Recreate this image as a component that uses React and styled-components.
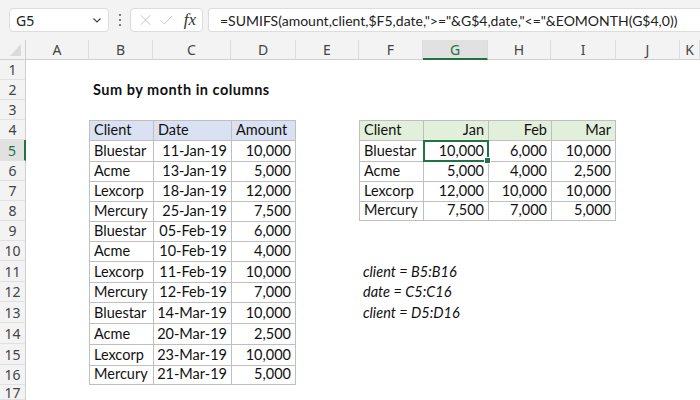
import React from 'react';
import styled, { createGlobalStyle } from 'styled-components';

const GlobalStyle = createGlobalStyle`
    html, body {
        margin: 0;
        padding: 0;
        background: #ffffff;
    }
    body {
        width: 700px;
        height: 400px;
        overflow: hidden;
    }
`;

const UI_FONT = '"Noto Sans", "Open Sans", sans-serif';
const CELL_FONT = 'Lato, "Liberation Sans", sans-serif';
const GREEN = '#217346';

const COLUMNS = [
    { key: 'A', width: 63 },
    { key: 'B', width: 64 },
    { key: 'C', width: 78 },
    { key: 'D', width: 65 },
    { key: 'E', width: 63 },
    { key: 'F', width: 64 },
    { key: 'G', width: 65 },
    { key: 'H', width: 63 },
    { key: 'I', width: 65 },
    { key: 'J', width: 64 },
    { key: 'K', width: 20 },
];

// row heights in px, row 1..17
const ROW_HEIGHTS = [20, 20, 20, 20, 21, 20, 20, 20, 20, 20, 21, 20, 21, 21, 21, 20, 15];

const Page = styled.div`
    display: flex;
    flex-direction: column;
    width: 700px;
    height: 400px;
    background: #ffffff;
    overflow: hidden;
`;

const Toolbar = styled.div`
    display: flex;
    align-items: center;
    height: 40px;
    padding: 0 0 0 9px;
    box-sizing: border-box;
    background: #f3f3f3;
`;

const NameBox = styled.div`
    display: flex;
    align-items: center;
    justify-content: space-between;
    width: 100px;
    height: 24px;
    box-sizing: border-box;
    padding: 0 5px 0 6px;
    background: #ffffff;
    border: 1px solid #dcdcdc;
    border-radius: 4px;
    font-family: ${UI_FONT};
    font-size: 14px;
    color: #222;
`;

const Kebab = styled.div`
    display: flex;
    flex-direction: column;
    align-items: center;
    gap: 3px;
    width: 21px;

    span {
        width: 2px;
        height: 2px;
        background: #555;
        border-radius: 1px;
    }
`;

const FxBox = styled.div`
    display: flex;
    align-items: center;
    gap: 9px;
    width: 73px;
    height: 24px;
    box-sizing: border-box;
    padding: 0 6px 0 9px;
    background: #ffffff;
    border: 1px solid #dcdcdc;
    border-radius: 4px;
`;

const FxLabel = styled.span`
    font-family: "Liberation Serif", serif;
    font-style: italic;
    font-size: 17px;
    color: #333;
    margin-left: 2px;
`;

const FormulaBox = styled.div`
    display: flex;
    align-items: center;
    flex: 1;
    height: 24px;
    margin-left: 5px;
    box-sizing: border-box;
    padding-left: 11px;
    background: #ffffff;
    border: 1px solid #dcdcdc;
    border-right: none;
    border-radius: 4px 0 0 4px;
    font-family: ${CELL_FONT};
    font-size: 14px;
    color: #222;
    white-space: nowrap;
    overflow: hidden;
`;

const Sheet = styled.div`
    display: grid;
    grid-template-columns: 26px ${COLUMNS.map((c) => `${c.width}px`).join(' ')};
    grid-template-rows: 20px ${ROW_HEIGHTS.map((h) => `${h}px`).join(' ')};
    background: #ffffff;
`;

const Corner = styled.div`
    position: relative;
    background: #f3f3f3;
    border-right: 1px solid #cfcfcf;
    border-bottom: 1px solid #cfcfcf;
    box-sizing: border-box;

    &::after {
        content: '';
        position: absolute;
        right: 4px;
        bottom: 3px;
        width: 0;
        height: 0;
        border-left: 11px solid transparent;
        border-bottom: 12px solid #dadada;
    }
`;

const ColHeader = styled.div`
    display: flex;
    align-items: center;
    justify-content: center;
    box-sizing: border-box;
    background: ${({ $active }) => ($active ? '#e1e1e1' : '#f3f3f3')};
    border-right: 1px solid #dcdcdc;
    border-bottom: ${({ $active }) => ($active ? `2px solid ${GREEN}` : '1px solid #cfcfcf')};
    font-family: ${UI_FONT};
    font-size: 14px;
    color: ${({ $active }) => ($active ? GREEN : '#444')};
    padding-top: ${({ $active }) => ($active ? '1px' : '0')};
`;

const RowHeader = styled.div`
    display: flex;
    align-items: center;
    justify-content: center;
    box-sizing: border-box;
    background: ${({ $active }) => ($active ? '#e1e1e1' : '#f3f3f3')};
    border-right: ${({ $active }) => ($active ? `2px solid ${GREEN}` : '1px solid #cfcfcf')};
    border-bottom: 1px solid #e1e1e1;
    font-family: ${UI_FONT};
    font-size: 14px;
    color: ${({ $active }) => ($active ? GREEN : '#444')};
`;

const Cell = styled.div`
    position: ${({ $selected }) => ($selected ? 'relative' : 'static')};
    display: flex;
    align-items: flex-end;
    justify-content: ${({ $align }) => ($align === 'right' ? 'flex-end' : 'flex-start')};
    box-sizing: border-box;
    padding: 0 4px 2px 4px;
    white-space: nowrap;
    font-family: ${CELL_FONT};
    font-size: 14.5px;
    font-weight: ${({ $bold }) => ($bold ? 700 : 400)};
    font-style: ${({ $italic }) => ($italic ? 'italic' : 'normal')};
    letter-spacing: ${({ $bold }) => ($bold ? '0.5px' : 'normal')};
    color: #111;
    background: ${({ $bg }) => $bg || 'transparent'};
    border-left: ${({ $framed }) => ($framed ? '1px solid #bfbfbf' : 'none')};
    border-top: ${({ $framed }) => ($framed ? '1px solid #bfbfbf' : 'none')};
    border-right: ${({ $lastCol }) => ($lastCol ? '1px solid #bfbfbf' : 'none')};
    border-bottom: ${({ $lastRow }) => ($lastRow ? '1px solid #bfbfbf' : 'none')};
`;

const Selection = styled.div`
    position: absolute;
    top: -1px;
    left: -1px;
    right: -1px;
    bottom: -1px;
    border: 2px solid ${GREEN};
    pointer-events: none;

    &::after {
        content: '';
        position: absolute;
        right: -4px;
        bottom: -4px;
        width: 5px;
        height: 5px;
        background: ${GREEN};
        border: 1px solid #ffffff;
    }
`;

const leftTable = {
    header: ['Client', 'Date', 'Amount'],
    headerAlign: ['left', 'left', 'left'],
    rows: [
        ['Bluestar', '11-Jan-19', '10,000'],
        ['Acme', '13-Jan-19', '5,000'],
        ['Lexcorp', '18-Jan-19', '12,000'],
        ['Mercury', '25-Jan-19', '7,500'],
        ['Bluestar', '05-Feb-19', '6,000'],
        ['Acme', '10-Feb-19', '4,000'],
        ['Lexcorp', '11-Feb-19', '10,000'],
        ['Mercury', '12-Feb-19', '7,000'],
        ['Bluestar', '14-Mar-19', '10,000'],
        ['Acme', '20-Mar-19', '2,500'],
        ['Lexcorp', '23-Mar-19', '10,000'],
        ['Mercury', '21-Mar-19', '5,000'],
    ],
};

const rightTable = {
    header: ['Client', 'Jan', 'Feb', 'Mar'],
    headerAlign: ['left', 'right', 'right', 'right'],
    rows: [
        ['Bluestar', '10,000', '6,000', '10,000'],
        ['Acme', '5,000', '4,000', '2,500'],
        ['Lexcorp', '12,000', '10,000', '10,000'],
        ['Mercury', '7,500', '7,000', '5,000'],
    ],
};

// builds a map like { 'B4': {...cell props} }
function buildCells() {
    const cells = {};

    const placeTable = (table, startCol, startRow, headBg) => {
        const all = [table.header, ...table.rows];
        all.forEach((row, ri) => {
            row.forEach((text, ci) => {
                const col = String.fromCharCode(startCol.charCodeAt(0) + ci);
                cells[`${col}${startRow + ri}`] = {
                    text,
                    align: ri === 0 ? table.headerAlign[ci] : ci === 0 ? 'left' : 'right',
                    bg: ri === 0 ? headBg : null,
                    framed: true,
                    lastCol: ci === row.length - 1,
                    lastRow: ri === all.length - 1,
                };
            });
        });
    };

    placeTable(leftTable, 'B', 4, '#d9e1f2');
    placeTable(rightTable, 'F', 4, '#e2efda');

    cells.B2 = { text: 'Sum by month in columns', bold: true };
    cells.F11 = { text: 'client = B5:B16', italic: true };
    cells.F12 = { text: 'date = C5:C16', italic: true };
    cells.F13 = { text: 'client = D5:D16', italic: true };

    return cells;
}

const CELLS = buildCells();
const ACTIVE = { col: 'G', row: 5 };

function ChevronIcon() {
    return (
        <svg width="12" height="12" viewBox="0 0 12 12">
            <path d="M2.5 4.5 L6 8 L9.5 4.5" fill="none" stroke="#444" strokeWidth="1.2" />
        </svg>
    );
}

function CancelIcon() {
    return (
        <svg width="14" height="14" viewBox="0 0 14 14">
            <path d="M1 1 L13 13 M13 1 L1 13" stroke="#c4c4c4" strokeWidth="1.2" />
        </svg>
    );
}

function EnterIcon() {
    return (
        <svg width="16" height="14" viewBox="0 0 16 14">
            <path d="M1 7.5 L5.5 12 L15 2" fill="none" stroke="#c4c4c4" strokeWidth="1.2" />
        </svg>
    );
}

function FormulaBar() {
    return (
        <Toolbar>
            <NameBox>
                G5
                <ChevronIcon />
            </NameBox>
            <Kebab>
                <span />
                <span />
                <span />
            </Kebab>
            <FxBox>
                <CancelIcon />
                <EnterIcon />
                <FxLabel>fx</FxLabel>
            </FxBox>
            <FormulaBox>
                =SUMIFS(amount,client,$F5,date,"&gt;="&amp;G$4,date,"&lt;="&amp;EOMONTH(G$4,0))
            </FormulaBox>
        </Toolbar>
    );
}

function App() {
    return (
        <Page>
            <GlobalStyle />
            <FormulaBar />
            <Sheet>
                <Corner />
                {COLUMNS.map((c) => (
                    <ColHeader key={c.key} $active={c.key === ACTIVE.col}>
                        {c.key}
                    </ColHeader>
                ))}
                {ROW_HEIGHTS.map((_, i) => {
                    const row = i + 1;
                    return (
                        <React.Fragment key={row}>
                            <RowHeader $active={row === ACTIVE.row}>{row}</RowHeader>
                            {COLUMNS.map((c) => {
                                const cell = CELLS[`${c.key}${row}`] || {};
                                const selected = c.key === ACTIVE.col && row === ACTIVE.row;
                                return (
                                    <Cell
                                        key={c.key}
                                        $align={cell.align}
                                        $bg={cell.bg}
                                        $framed={cell.framed}
                                        $lastCol={cell.lastCol}
                                        $lastRow={cell.lastRow}
                                        $bold={cell.bold}
                                        $italic={cell.italic}
                                        $selected={selected}
                                    >
                                        {cell.text}
                                        {selected && <Selection />}
                                    </Cell>
                                );
                            })}
                        </React.Fragment>
                    );
                })}
            </Sheet>
        </Page>
    );
}

export default App;
